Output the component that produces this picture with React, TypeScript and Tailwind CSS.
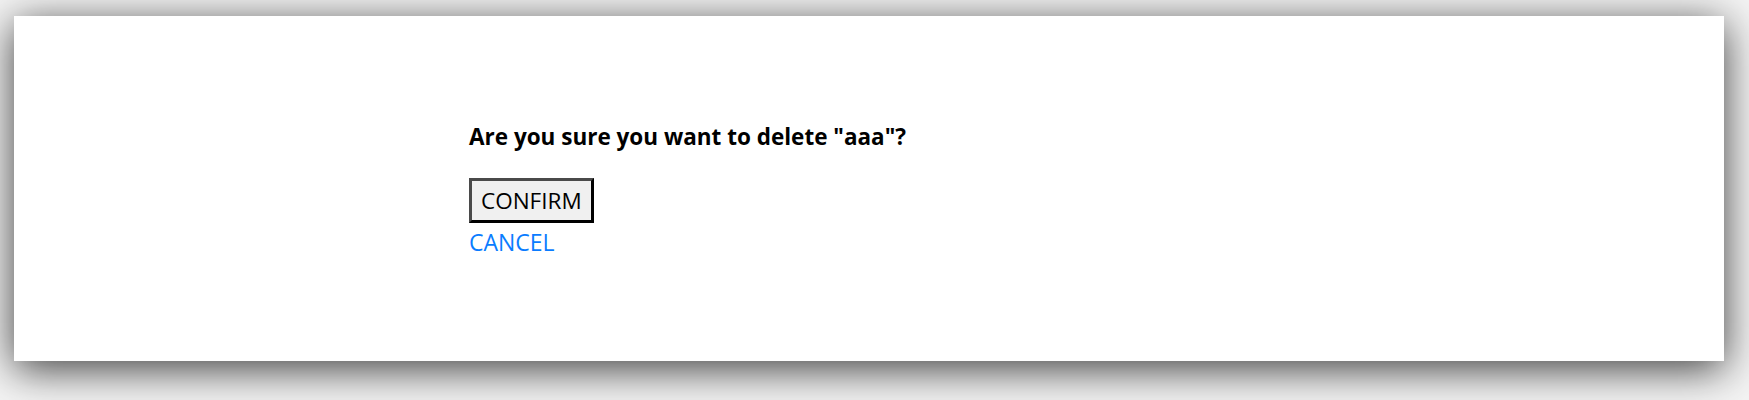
export default function App() {
  return (
    <div className="min-h-[400px] w-full bg-[#f4f4f4] pt-4 pl-[14px] pr-[25px] pb-[39px] font-['Open_Sans','Noto_Sans',sans-serif]">
      <div className="h-[345px] bg-white shadow-[0_8px_40px_rgba(0,0,0,0.75)]">
        <div className="mx-auto w-[800px] pt-[106px]">
          <h2 className="text-[22.5px] font-bold leading-[30px] text-black">Are you sure you want to delete "aaa"?</h2>
          <div className="mt-[26px] flex flex-col items-start">
            <button className="h-[45px] border-[3px] border-t-[#4a4a4a] border-l-[#4a4a4a] border-r-black border-b-black bg-[#f0f0f0] px-[9px] text-[22.5px] text-black">
              CONFIRM
            </button>
            <a href="#" className="mt-[5px] text-[23px] leading-7 text-[#0a7cff]">
              CANCEL
            </a>
          </div>
        </div>
      </div>
    </div>
  )
}
